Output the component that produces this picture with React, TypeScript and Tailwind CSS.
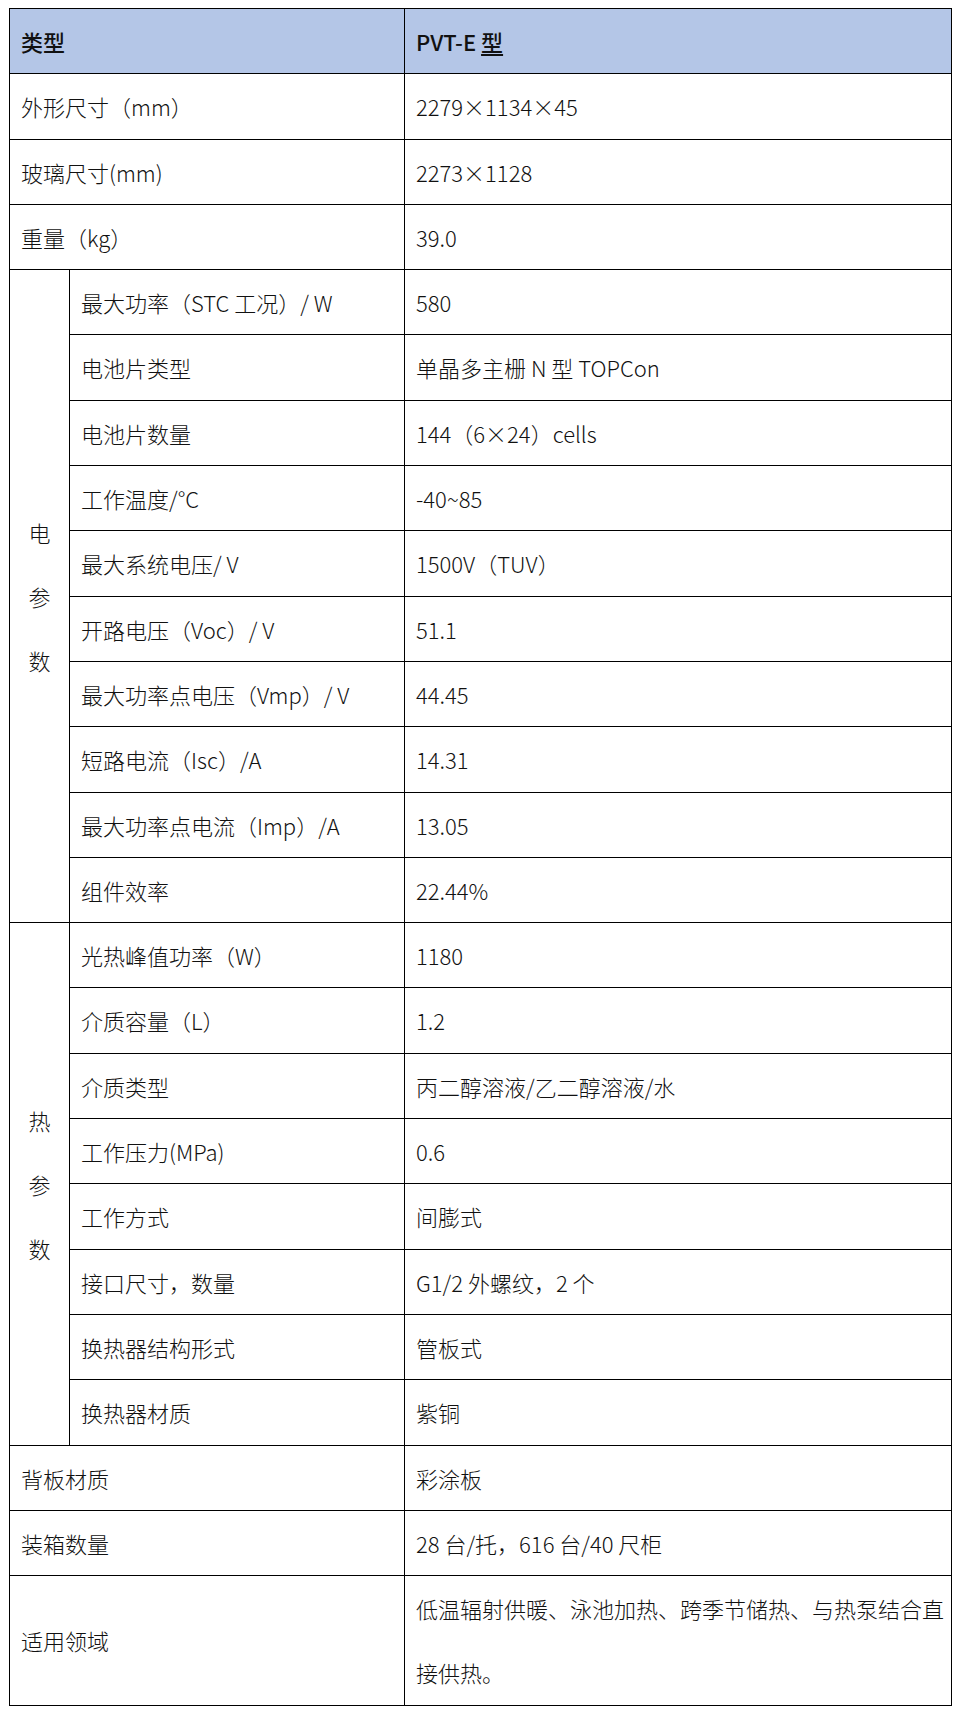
const topRows = [
  ["外形尺寸（mm）", "2279×1134×45"],
  ["玻璃尺寸(mm)", "2273×1128"],
  ["重量（kg）", "39.0"],
];

const electricRows = [
  ["最大功率（STC 工况）/ W", "580"],
  ["电池片类型", "单晶多主栅 N 型 TOPCon"],
  ["电池片数量", "144（6×24）cells"],
  ["工作温度/°C", "-40~85"],
  ["最大系统电压/ V", "1500V（TUV）"],
  ["开路电压（Voc）/ V", "51.1"],
  ["最大功率点电压（Vmp）/ V", "44.45"],
  ["短路电流（Isc）/A", "14.31"],
  ["最大功率点电流（Imp）/A", "13.05"],
  ["组件效率", "22.44%"],
];

const thermalRows = [
  ["光热峰值功率（W）", "1180"],
  ["介质容量（L）", "1.2"],
  ["介质类型", "丙二醇溶液/乙二醇溶液/水"],
  ["工作压力(MPa)", "0.6"],
  ["工作方式", "间膨式"],
  ["接口尺寸，数量", "G1/2 外螺纹，2 个"],
  ["换热器结构形式", "管板式"],
  ["换热器材质", "紫铜"],
];

const bottomRows = [
  ["背板材质", "彩涂板"],
  ["装箱数量", "28 台/托，616 台/40 尺柜"],
];

const cell = "border border-black pl-[11px] pr-[6px] py-0 align-middle text-left";

const GroupRows = ({ label, rows }: { label: string[]; rows: string[][] }) => (
  <>
    {rows.map(([name, value], i) => (
      <tr key={name}>
        {i === 0 && (
          <td
            rowSpan={rows.length}
            className="border border-black p-0 text-center align-middle leading-[64px]"
          >
            {label.map((ch) => (
              <div key={ch}>{ch}</div>
            ))}
          </td>
        )}
        <td className={cell}>{name}</td>
        <td className={cell}>{value}</td>
      </tr>
    ))}
  </>
);

export default function App() {
  return (
    <div className="min-h-[1711px] bg-white pt-[8px] pl-[9px] font-['Noto_Sans_CJK_SC','Noto_Sans',sans-serif] text-[22px] font-light leading-[64.3px] text-[#111]">
      <table className="w-[942px] table-fixed border-collapse border border-black">
        <colgroup>
          <col className="w-[60px]" />
          <col className="w-[335px]" />
          <col className="w-[547px]" />
        </colgroup>
        <tbody>
          <tr className="bg-[#b4c6e7] font-medium">
            <td colSpan={2} className={cell}>
              类型
            </td>
            <td className={cell}>
              PVT-E <span className="underline underline-offset-[3px]">型</span>
            </td>
          </tr>

          {topRows.map(([name, value]) => (
            <tr key={name}>
              <td colSpan={2} className={cell}>
                {name}
              </td>
              <td className={cell}>{value}</td>
            </tr>
          ))}

          <GroupRows label={["电", "参", "数"]} rows={electricRows} />
          <GroupRows label={["热", "参", "数"]} rows={thermalRows} />

          {bottomRows.map(([name, value]) => (
            <tr key={name}>
              <td colSpan={2} className={cell}>
                {name}
              </td>
              <td className={cell}>{value}</td>
            </tr>
          ))}

          <tr>
            <td colSpan={2} className={cell}>
              适用领域
            </td>
            <td className={cell}>
              低温辐射供暖、泳池加热、跨季节储热、与热泵结合直接供热。
            </td>
          </tr>
        </tbody>
      </table>
    </div>
  );
}
